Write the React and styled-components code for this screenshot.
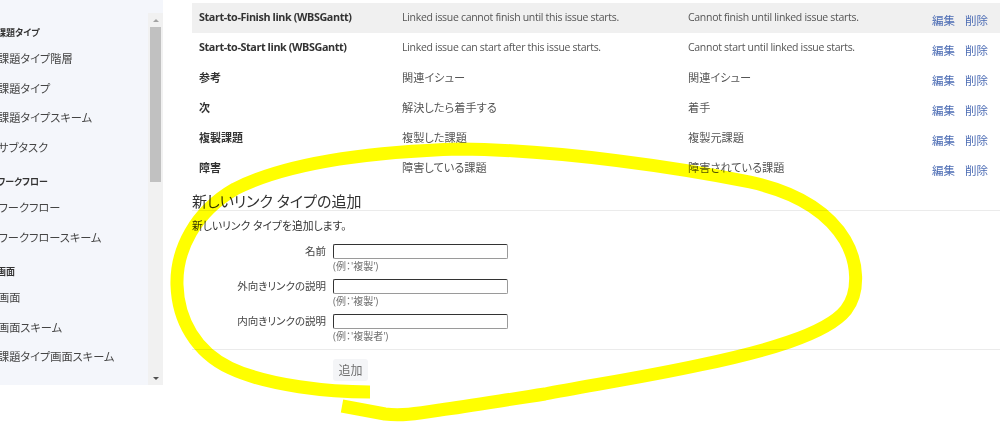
import React from 'react';
import styled, { createGlobalStyle } from 'styled-components';

const GlobalStyle = createGlobalStyle`
  html, body { margin: 0; padding: 0; background: #fff; }
  body {
    font-family: "Open Sans", "Noto Sans CJK JP", sans-serif;
    font-feature-settings: "palt";
    -webkit-font-smoothing: antialiased;
  }
  #root { width: 1000px; height: 423px; overflow: hidden; position: relative; }
  * { box-sizing: border-box; }
`;

const Page = styled.div`
  display: flex;
  align-items: flex-start;
  width: 1000px;
  height: 423px;
`;

const Sidebar = styled.aside`
  width: 163px;
  height: 385px;
  flex: none;
  background: #f4f6fb;
  padding-top: 13px;
  display: flex;
`;

const NavList = styled.nav`
  flex: 1;
  padding-top: 12px;
  overflow: hidden;
`;

const NavSection = styled.div`
  & + & { margin-top: 12px; }
`;

const NavHeader = styled.div`
  height: 16px;
  line-height: 16px;
  margin: 0 0 3px -3px;
  font-size: 9px;
  font-weight: 700;
  color: #333;
  white-space: nowrap;
`;

const NavItem = styled.div`
  height: 29.5px;
  line-height: 29.5px;
  margin-left: -2px;
  font-size: 11.2px;
  color: #444;
  white-space: nowrap;
`;

const Scrollbar = styled.div`
  width: 15px;
  flex: none;
  background: #f1f1f1;
  display: flex;
  flex-direction: column;
`;

const ScrollArrow = styled.div`
  height: 14px;
  display: flex;
  align-items: center;
  justify-content: center;
  &::before {
    content: "";
    width: 0;
    height: 0;
    border-left: 3px solid transparent;
    border-right: 3px solid transparent;
    ${p => (p.$down ? 'border-top: 3px solid #505050;' : 'border-bottom: 3px solid #a3a3a3;')}
  }
`;

const ScrollTrack = styled.div`
  flex: 1;
  padding: 0 2px;
`;

const ScrollThumb = styled.div`
  height: 155px;
  background: #c1c1c1;
`;

const Main = styled.main`
  flex: 1;
  padding: 3px 0 0 29px;
  min-width: 0;
`;

const Row = styled.div`
  display: grid;
  grid-template-columns: 203px 286px 244px 1fr;
  height: 30px;
  align-items: center;
  background: ${p => (p.$hover ? '#f0f0f0' : 'transparent')};
`;

const Cell = styled.div`
  padding: 0 0 3px 7px;
  font-size: ${p => (p.$latin ? '10.5px' : '11.2px')};
  letter-spacing: ${p => (p.$latin ? '-0.3px' : '0')};
  color: #555;
  white-space: nowrap;
`;

const NameCell = styled(Cell)`
  font-weight: 700;
  font-size: ${p => (p.$latin ? '10.8px' : '11px')};
  letter-spacing: ${p => (p.$latin ? '-0.4px' : '0')};
  color: #333;
`;

const Actions = styled.div`
  display: flex;
  gap: 10px;
  padding: 4px 0 0 7px;
`;

const ActionLink = styled.a`
  color: #4c6cb4;
  font-size: 11.5px;
  text-decoration: none;
  cursor: pointer;
`;

const Heading = styled.h2`
  margin: 9px 0 0;
  font-size: 15px;
  font-weight: 400;
  line-height: 18px;
  color: #333;
  border-bottom: 1px solid #ebebeb;
`;

const Description = styled.p`
  margin: 7px 0 0;
  font-size: 10.8px;
  line-height: 16px;
  color: #333;
`;

const Form = styled.form`
  margin-top: 10px;
`;

const FieldRow = styled.div`
  display: grid;
  grid-template-columns: 134px 175px;
  column-gap: 7px;
  margin-bottom: 7px;
`;

const Label = styled.label`
  text-align: right;
  font-size: 10.5px;
  line-height: 15px;
  color: #444;
  white-space: nowrap;
`;

const Input = styled.input`
  height: 15px;
  width: 175px;
  padding: 0 2px;
  border: 1px solid;
  border-color: #333 #9a9a9a #9a9a9a #333;
  border-radius: 2px;
  background: #fff;
  outline: none;
`;

const Hint = styled.div`
  grid-column: 2;
  margin-top: 1px;
  font-size: 10px;
  line-height: 12px;
  color: #707070;
`;

const Divider = styled.div`
  border-top: 1px solid #ebebeb;
`;

const ButtonRow = styled.div`
  padding: 8px 0 0 141px;
`;

const Button = styled.button`
  width: 35px;
  height: 22px;
  padding: 0;
  border: none;
  border-radius: 3px;
  background: #f4f5f7;
  color: #707070;
  font-family: inherit;
  font-size: 12px;
`;

const Overlay = styled.svg`
  position: absolute;
  top: 0;
  left: 0;
  width: 1000px;
  height: 423px;
  pointer-events: none;
  mix-blend-mode: multiply;
`;

const nav = [
  { title: '課題タイプ', items: ['課題タイプ階層', '課題タイプ', '課題タイプスキーム', 'サブタスク'] },
  { title: 'ワークフロー', items: ['ワークフロー', 'ワークフロースキーム'] },
  { title: '画面', items: ['画面', '画面スキーム', '課題タイプ画面スキーム'] },
];

const links = [
  ['Start-to-Finish link (WBSGantt)', 'Linked issue cannot finish until this issue starts.', 'Cannot finish until linked issue starts.'],
  ['Start-to-Start link (WBSGantt)', 'Linked issue can start after this issue starts.', 'Cannot start until linked issue starts.'],
  ['参考', '関連イシュー', '関連イシュー'],
  ['次', '解決したら着手する', '着手'],
  ['複製課題', '複製した課題', '複製元課題'],
  ['障害', '障害している課題', '障害されている課題'],
];

const fields = [
  ['名前', "(例：'複製')"],
  ['外向きリンクの説明', "(例：'複製')"],
  ['内向きリンクの説明', "(例：'複製者')"],
];

const isLatin = s => /^[\x20-\x7e]+$/.test(s);

export default function App() {
  return (
    <>
      <GlobalStyle />
      <Page>
        <Sidebar>
          <NavList>
            {nav.map(s => (
              <NavSection key={s.title}>
                <NavHeader>{s.title}</NavHeader>
                {s.items.map(i => (
                  <NavItem key={i}>{i}</NavItem>
                ))}
              </NavSection>
            ))}
          </NavList>
          <Scrollbar>
            <ScrollArrow />
            <ScrollTrack>
              <ScrollThumb />
            </ScrollTrack>
            <ScrollArrow $down />
          </Scrollbar>
        </Sidebar>
        <Main>
          {links.map((l, idx) => (
            <Row key={l[0]} $hover={idx === 0}>
              <NameCell $latin={isLatin(l[0])}>{l[0]}</NameCell>
              <Cell $latin={isLatin(l[1])}>{l[1]}</Cell>
              <Cell $latin={isLatin(l[2])}>{l[2]}</Cell>
              <Actions>
                <ActionLink>編集</ActionLink>
                <ActionLink>削除</ActionLink>
              </Actions>
            </Row>
          ))}
          <Heading>新しいリンク タイプの追加</Heading>
          <Description>新しいリンク タイプを追加します。</Description>
          <Form onSubmit={e => e.preventDefault()}>
            {fields.map(([label, hint]) => (
              <FieldRow key={label}>
                <Label>{label}</Label>
                <Input type="text" />
                <Hint>{hint}</Hint>
              </FieldRow>
            ))}
            <Divider />
            <ButtonRow>
              <Button type="submit">追加</Button>
            </ButtonRow>
          </Form>
        </Main>
      </Page>
      <Overlay viewBox="0 0 1000 423">
        <path
          d="M370,392 C330,392 268,386 230,368 C196,352 178,320 177,285 C176,250 195,212 235,189 C282,165 362,152 460,149 C562,150 680,168 750,182 C800,193 830,215 845,240 C858,262 860,292 846,310 C826,335 762,352 700,365 C640,378 585,386 545,394 C505,400 470,406 440,410 C415,414 400,416 385,414 L342,406"
          fill="none"
          stroke="#ffff00"
          strokeWidth="13"
          strokeLinecap="butt"
          strokeLinejoin="round"
        />
      </Overlay>
    </>
  );
}
